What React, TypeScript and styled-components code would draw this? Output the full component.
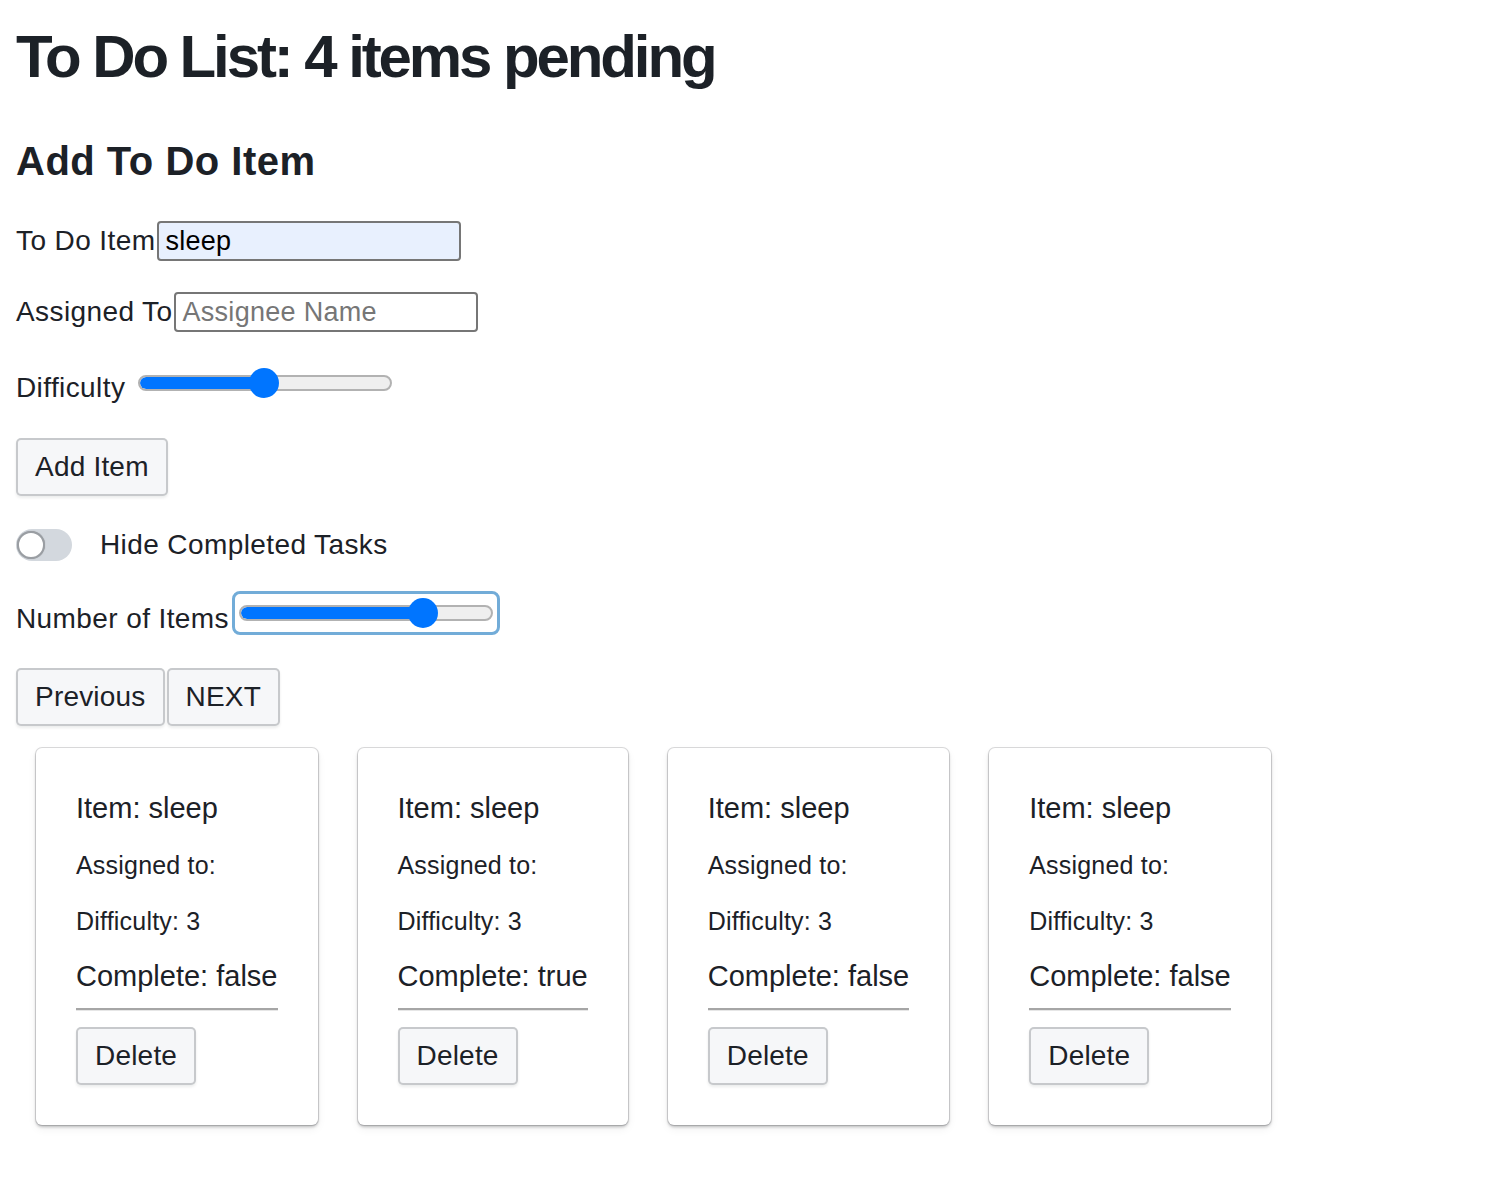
import React from "react";
import styled, { createGlobalStyle } from "styled-components";

const GlobalStyle = createGlobalStyle`
  html, body { margin: 0; padding: 0; background: #ffffff; }
  body {
    font-family: "Liberation Sans", Arial, Helvetica, sans-serif;
    color: #1c2127;
  }
  * { box-sizing: border-box; }
`;

const Page = styled.div`
  padding: 21px 16px 40px 16px;
`;

const Title = styled.h1`
  margin: 0 0 45px 0;
  font-size: 60px;
  line-height: 72px;
  font-weight: 700;
  letter-spacing: -3.1px;
  color: #1c2127;
`;

const Subtitle = styled.h2`
  margin: 0;
  font-size: 40px;
  line-height: 46px;
  font-weight: 700;
  letter-spacing: 0.5px;
  color: #1c2127;
`;

const Row = styled.div<{ $top: number; $h?: number; $align?: string }>`
  display: flex;
  align-items: ${(p) => p.$align ?? "center"};
  margin-top: ${(p) => p.$top}px;
  min-height: ${(p) => p.$h ?? 40}px;
`;

const Label = styled.span<{ $offset?: number }>`
  font-size: 28px;
  line-height: 40px;
  letter-spacing: 0.4px;
  white-space: nowrap;
  margin-top: ${(p) => p.$offset ?? 0}px;
`;

const TextInput = styled.input<{ $filled?: boolean }>`
  width: 304px;
  height: 40px;
  margin: 0 0 0 2px;
  padding: 0 6px;
  font-family: "Liberation Sans", Arial, sans-serif;
  font-size: 27px;
  letter-spacing: 0.3px;
  color: #000;
  background: ${(p) => (p.$filled ? "#e8f0fe" : "#ffffff")};
  border: 2px solid #767676;
  border-radius: 4px;
  outline: none;
  &::placeholder { color: #767676; }
`;

const SliderFrame = styled.div<{ $focused?: boolean; $ml: number }>`
  margin-left: ${(p) => p.$ml}px;
  padding: ${(p) => (p.$focused ? "4px 4px" : "0")};
  border: ${(p) => (p.$focused ? "3px solid #72acd8" : "none")};
  border-radius: 8px;
  display: flex;
  align-items: center;
`;

const Track = styled.div<{ $w: number }>`
  position: relative;
  width: ${(p) => p.$w}px;
  height: 30px;
  display: flex;
  align-items: center;
`;

const Rail = styled.div`
  width: 100%;
  height: 16px;
  border-radius: 8px;
  background: #efefef;
  border: 2px solid #b2b2b2;
  overflow: hidden;
`;

const Fill = styled.div`
  height: 100%;
  background: #0075ff;
  border-radius: 8px 0 0 8px;
`;

const Thumb = styled.div`
  position: absolute;
  top: 0;
  width: 30px;
  height: 30px;
  margin-left: -15px;
  border-radius: 50%;
  background: #0075ff;
`;

const Button = styled.button`
  height: 58px;
  padding: 0 19px;
  font-family: "Liberation Sans", Arial, sans-serif;
  font-size: 28px;
  letter-spacing: 0.2px;
  color: #1c2127;
  background: #f6f7f9;
  border: none;
  border-radius: 5px;
  box-shadow: inset 0 0 0 2px rgba(17, 20, 24, 0.2), 0 2px 3px rgba(17, 20, 24, 0.08);
  cursor: pointer;
`;

const ButtonGroup = styled.div`
  display: flex;
  gap: 2px;
`;

const SwitchTrack = styled.div`
  position: relative;
  width: 56px;
  height: 32px;
  border-radius: 16px;
  background: #d3d8de;
  flex: none;
`;

const SwitchKnob = styled.div`
  position: absolute;
  left: 1px;
  top: 2px;
  width: 28px;
  height: 28px;
  border-radius: 50%;
  background: #ffffff;
  border: 2.5px solid #9a9ea3;
  box-shadow: 0 0 1px rgba(0, 0, 0, 0.3);
`;

const SwitchLabel = styled.span`
  margin-left: 28px;
  font-size: 28px;
  line-height: 40px;
  letter-spacing: 0.4px;
`;

const CardList = styled.div`
  display: flex;
  align-items: flex-start;
  flex-wrap: wrap;
  margin-top: 2px;
`;

const Card = styled.div`
  margin: 20px;
  padding: 32px 40px 40px 40px;
  background: #ffffff;
  border-radius: 6px;
  box-shadow: 0 0 0 1px rgba(17, 20, 24, 0.15), 0 2px 3px rgba(17, 20, 24, 0.25),
    0 4px 10px rgba(17, 20, 24, 0.06);
`;

const CardLine = styled.div<{ $small?: boolean }>`
  height: 56px;
  line-height: 56px;
  font-size: ${(p) => (p.$small ? 25 : 29)}px;
  letter-spacing: ${(p) => (p.$small ? 0.2 : 0)}px;
  padding-top: ${(p) => (p.$small ? 1 : 0)}px;
  white-space: nowrap;
`;

const Divider = styled.hr`
  margin: 4px 0 16px 0;
  height: 3px;
  border: none;
  border-top: 2px solid #a6a6a6;
  border-bottom: 1px solid #e6e6e6;
`;

type SliderProps = { width: number; value: number; focused?: boolean; ml: number };

const Slider: React.FC<SliderProps> = ({ width, value, focused, ml }) => (
  <SliderFrame $focused={focused} $ml={ml}>
    <Track $w={width}>
      <Rail>
        <Fill style={{ width: `${value}px` }} />
      </Rail>
      <Thumb style={{ left: `${value}px` }} />
    </Track>
  </SliderFrame>
);

const items = [
  { text: "sleep", assignee: "", difficulty: 3, complete: false },
  { text: "sleep", assignee: "", difficulty: 3, complete: true },
  { text: "sleep", assignee: "", difficulty: 3, complete: false },
  { text: "sleep", assignee: "", difficulty: 3, complete: false },
];

export default function App() {
  return (
    <>
      <GlobalStyle />
      <Page>
        <Title>To Do List: 4 items pending</Title>
        <Subtitle>Add To Do Item</Subtitle>

        <Row $top={37}>
          <Label>To Do Item</Label>
          <TextInput $filled defaultValue="sleep" />
        </Row>
        <Row $top={31}>
          <Label>Assigned To</Label>
          <TextInput placeholder="Assignee Name" />
        </Row>
        <Row $top={36} $align="flex-start">
          <Label>Difficulty</Label>
          <Slider width={254} value={126} ml={13} />
        </Row>
        <Row $top={30} $h={58}>
          <Button>Add Item</Button>
        </Row>
        <Row $top={29}>
          <SwitchTrack>
            <SwitchKnob />
          </SwitchTrack>
          <SwitchLabel>Hide Completed Tasks</SwitchLabel>
        </Row>
        <Row $top={26} $h={44} $align="flex-start">
          <Label $offset={8}>Number of Items</Label>
          <Slider width={254} value={184} focused ml={3} />
        </Row>
        <Row $top={29} $h={58}>
          <ButtonGroup>
            <Button>Previous</Button>
            <Button>NEXT</Button>
          </ButtonGroup>
        </Row>

        <CardList>
          {items.map((item, i) => (
            <Card key={i}>
              <CardLine>Item: {item.text}</CardLine>
              <CardLine $small>Assigned to: {item.assignee}</CardLine>
              <CardLine $small>Difficulty: {item.difficulty}</CardLine>
              <CardLine>Complete: {item.complete ? "true" : "false"}</CardLine>
              <Divider />
              <Button>Delete</Button>
            </Card>
          ))}
        </CardList>
      </Page>
    </>
  );
}
